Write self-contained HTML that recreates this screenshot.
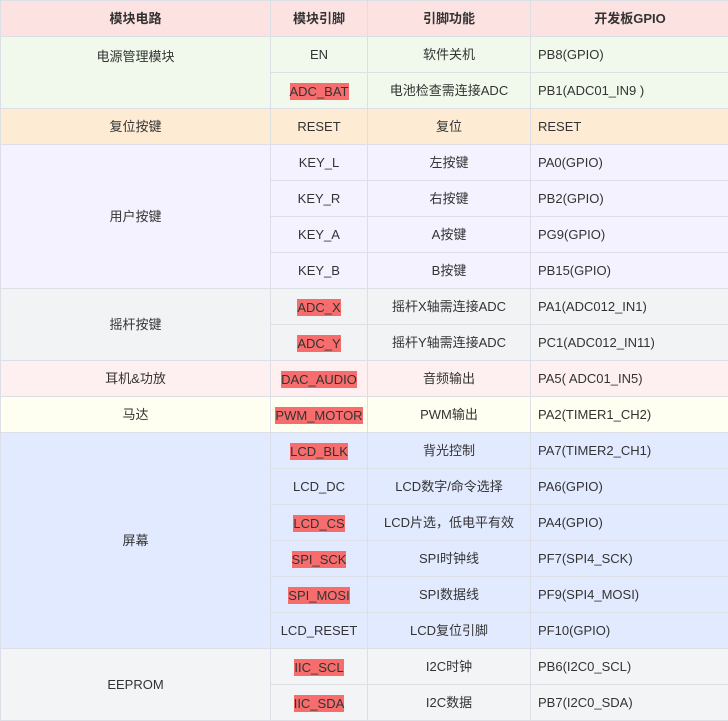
<!DOCTYPE html>
<html><head><meta charset="utf-8"><style>
html,body{margin:0;padding:0;background:#fff;width:728px;height:721px;overflow:hidden}
table{border-collapse:collapse;table-layout:fixed;width:729px;font-family:"Liberation Sans","Noto Sans CJK SC",sans-serif;font-size:13px;color:#333}
td,th{border:1px solid #dcdfe6;height:35px;padding:0;text-align:center;vertical-align:middle;line-height:17px}
th{font-weight:bold}
td:last-child,th:last-child{text-align:left;padding-left:7px}
th:last-child{text-align:center;padding-left:0}
span{display:inline-block;line-height:17px;vertical-align:middle}
.h{background:#fde2e2}
.g{background:#f0f9eb}
.o{background:#fdebd3}
.p{background:#f4f2fe}
.s{background:#f2f3f5}
.k{background:#fef0f0}
.y{background:#fefff0}
.b{background:#e2eaff}
.e{background:#f3f4f6}
.r{background:#f76c6c}
td.l{vertical-align:top;padding-top:11px}
</style></head><body>
<table>
<colgroup><col style="width:270px"><col style="width:97px"><col style="width:163px"><col style="width:199px"></colgroup>
<tr class="h"><th>模块电路</th><th>模块引脚</th><th>引脚功能</th><th>开发板GPIO</th></tr>
<tr class="g"><td rowspan="2" class="l">电源管理模块</td><td>EN</td><td>软件关机</td><td>PB8(GPIO)</td></tr>
<tr class="g"><td><span class="r">ADC_BAT</span></td><td>电池检查需连接ADC</td><td>PB1(ADC01_IN9 )</td></tr>
<tr class="o"><td>复位按键</td><td>RESET</td><td>复位</td><td>RESET</td></tr>
<tr class="p"><td rowspan="4">用户按键</td><td>KEY_L</td><td>左按键</td><td>PA0(GPIO)</td></tr>
<tr class="p"><td>KEY_R</td><td>右按键</td><td>PB2(GPIO)</td></tr>
<tr class="p"><td>KEY_A</td><td>A按键</td><td>PG9(GPIO)</td></tr>
<tr class="p"><td>KEY_B</td><td>B按键</td><td>PB15(GPIO)</td></tr>
<tr class="s"><td rowspan="2">摇杆按键</td><td><span class="r">ADC_X</span></td><td>摇杆X轴需连接ADC</td><td>PA1(ADC012_IN1)</td></tr>
<tr class="s"><td><span class="r">ADC_Y</span></td><td>摇杆Y轴需连接ADC</td><td>PC1(ADC012_IN11)</td></tr>
<tr class="k"><td>耳机&amp;功放</td><td><span class="r">DAC_AUDIO</span></td><td>音频输出</td><td>PA5( ADC01_IN5)</td></tr>
<tr class="y"><td>马达</td><td><span class="r">PWM_MOTOR</span></td><td>PWM输出</td><td>PA2(TIMER1_CH2)</td></tr>
<tr class="b"><td rowspan="6">屏幕</td><td><span class="r">LCD_BLK</span></td><td>背光控制</td><td>PA7(TIMER2_CH1)</td></tr>
<tr class="b"><td>LCD_DC</td><td>LCD数字/命令选择</td><td>PA6(GPIO)</td></tr>
<tr class="b"><td><span class="r">LCD_CS</span></td><td>LCD片选，低电平有效</td><td>PA4(GPIO)</td></tr>
<tr class="b"><td><span class="r">SPI_SCK</span></td><td>SPI时钟线</td><td>PF7(SPI4_SCK)</td></tr>
<tr class="b"><td><span class="r">SPI_MOSI</span></td><td>SPI数据线</td><td>PF9(SPI4_MOSI)</td></tr>
<tr class="b"><td>LCD_RESET</td><td>LCD复位引脚</td><td>PF10(GPIO)</td></tr>
<tr class="e"><td rowspan="2">EEPROM</td><td><span class="r">IIC_SCL</span></td><td>I2C时钟</td><td>PB6(I2C0_SCL)</td></tr>
<tr class="e"><td><span class="r">IIC_SDA</span></td><td>I2C数据</td><td>PB7(I2C0_SDA)</td></tr>
</table>
</body></html>
